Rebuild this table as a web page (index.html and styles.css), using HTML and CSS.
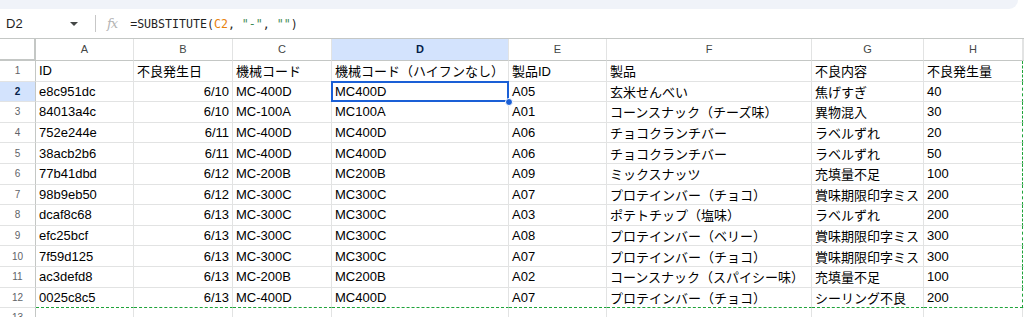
FILE: index.html
```html
<!DOCTYPE html>
<html lang="ja">
<head>
    <meta charset="UTF-8">
    <meta name="viewport" content="width=device-width, initial-scale=1.0">
    <title>不良データ</title>
    <link rel="stylesheet" href="styles.css">
</head>
<body>
    <div class="topbar"></div>
    <div class="formula-bar">
        <div class="name-box">
            <span>D2</span>
            <span class="caret"></span>
        </div>
        <div class="divider"></div>
        <span class="fx">fx</span>
        <div class="formula">=SUBSTITUTE(<span class="ref">C2</span>, <span class="str">"-"</span>, <span class="str">""</span>)</div>
    </div>

    <div class="sheet">
        <div class="row head">
            <div class="corner"></div>
            <div class="col">A</div>
            <div class="col">B</div>
            <div class="col">C</div>
            <div class="col picked">D</div>
            <div class="col">E</div>
            <div class="col">F</div>
            <div class="col">G</div>
            <div class="col">H</div>
            <div class="col"></div>
        </div>

        <div class="row">
            <div class="num">1</div>
            <div class="cell">ID</div>
            <div class="cell">不良発生日</div>
            <div class="cell">機械コード</div>
            <div class="cell">機械コード（ハイフンなし）</div>
            <div class="cell">製品ID</div>
            <div class="cell">製品</div>
            <div class="cell">不良内容</div>
            <div class="cell last">不良発生量</div>
            <div class="cell"></div>
        </div>
        <div class="row">
            <div class="num picked">2</div>
            <div class="cell">e8c951dc</div>
            <div class="cell right">6/10</div>
            <div class="cell">MC-400D</div>
            <div class="cell active">MC400D</div>
            <div class="cell">A05</div>
            <div class="cell">玄米せんべい</div>
            <div class="cell">焦げすぎ</div>
            <div class="cell last">40</div>
            <div class="cell"></div>
        </div>
        <div class="row">
            <div class="num">3</div>
            <div class="cell">84013a4c</div>
            <div class="cell right">6/10</div>
            <div class="cell">MC-100A</div>
            <div class="cell">MC100A</div>
            <div class="cell">A01</div>
            <div class="cell">コーンスナック（チーズ味）</div>
            <div class="cell">異物混入</div>
            <div class="cell last">30</div>
            <div class="cell"></div>
        </div>
        <div class="row">
            <div class="num">4</div>
            <div class="cell">752e244e</div>
            <div class="cell right">6/11</div>
            <div class="cell">MC-400D</div>
            <div class="cell">MC400D</div>
            <div class="cell">A06</div>
            <div class="cell">チョコクランチバー</div>
            <div class="cell">ラベルずれ</div>
            <div class="cell last">20</div>
            <div class="cell"></div>
        </div>
        <div class="row">
            <div class="num">5</div>
            <div class="cell">38acb2b6</div>
            <div class="cell right">6/11</div>
            <div class="cell">MC-400D</div>
            <div class="cell">MC400D</div>
            <div class="cell">A06</div>
            <div class="cell">チョコクランチバー</div>
            <div class="cell">ラベルずれ</div>
            <div class="cell last">50</div>
            <div class="cell"></div>
        </div>
        <div class="row">
            <div class="num">6</div>
            <div class="cell">77b41dbd</div>
            <div class="cell right">6/12</div>
            <div class="cell">MC-200B</div>
            <div class="cell">MC200B</div>
            <div class="cell">A09</div>
            <div class="cell">ミックスナッツ</div>
            <div class="cell">充填量不足</div>
            <div class="cell last">100</div>
            <div class="cell"></div>
        </div>
        <div class="row">
            <div class="num">7</div>
            <div class="cell">98b9eb50</div>
            <div class="cell right">6/12</div>
            <div class="cell">MC-300C</div>
            <div class="cell">MC300C</div>
            <div class="cell">A07</div>
            <div class="cell">プロテインバー（チョコ）</div>
            <div class="cell">賞味期限印字ミス</div>
            <div class="cell last">200</div>
            <div class="cell"></div>
        </div>
        <div class="row">
            <div class="num">8</div>
            <div class="cell">dcaf8c68</div>
            <div class="cell right">6/13</div>
            <div class="cell">MC-300C</div>
            <div class="cell">MC300C</div>
            <div class="cell">A03</div>
            <div class="cell">ポテトチップ（塩味）</div>
            <div class="cell">ラベルずれ</div>
            <div class="cell last">200</div>
            <div class="cell"></div>
        </div>
        <div class="row">
            <div class="num">9</div>
            <div class="cell">efc25bcf</div>
            <div class="cell right">6/13</div>
            <div class="cell">MC-300C</div>
            <div class="cell">MC300C</div>
            <div class="cell">A08</div>
            <div class="cell">プロテインバー（ベリー）</div>
            <div class="cell">賞味期限印字ミス</div>
            <div class="cell last">300</div>
            <div class="cell"></div>
        </div>
        <div class="row">
            <div class="num">10</div>
            <div class="cell">7f59d125</div>
            <div class="cell right">6/13</div>
            <div class="cell">MC-300C</div>
            <div class="cell">MC300C</div>
            <div class="cell">A07</div>
            <div class="cell">プロテインバー（チョコ）</div>
            <div class="cell">賞味期限印字ミス</div>
            <div class="cell last">300</div>
            <div class="cell"></div>
        </div>
        <div class="row">
            <div class="num">11</div>
            <div class="cell">ac3defd8</div>
            <div class="cell right">6/13</div>
            <div class="cell">MC-200B</div>
            <div class="cell">MC200B</div>
            <div class="cell">A02</div>
            <div class="cell">コーンスナック（スパイシー味）</div>
            <div class="cell">充填量不足</div>
            <div class="cell last">100</div>
            <div class="cell"></div>
        </div>
        <div class="row end">
            <div class="num">12</div>
            <div class="cell">0025c8c5</div>
            <div class="cell right">6/13</div>
            <div class="cell">MC-400D</div>
            <div class="cell">MC400D</div>
            <div class="cell">A07</div>
            <div class="cell">プロテインバー（チョコ）</div>
            <div class="cell">シーリング不良</div>
            <div class="cell last">200</div>
            <div class="cell"></div>
        </div>
        <div class="row">
            <div class="num">13</div>
            <div class="cell"></div>
            <div class="cell"></div>
            <div class="cell"></div>
            <div class="cell"></div>
            <div class="cell"></div>
            <div class="cell"></div>
            <div class="cell"></div>
            <div class="cell"></div>
            <div class="cell"></div>
        </div>
    </div>
</body>
</html>
```

FILE: styles.css
```css
:root {
    --grid: #e2e3e3;
    --head-line: #c4c7c5;
    --pick-bg: #d3e3fd;
    --pick-fg: #041e49;
    --blue: #1a5fd6;
    --copy: #1fa33a;
}
body, html {
    margin: 0;
    padding: 0;
    background-color: #ffffff;
    overflow: hidden;
}
body {
    font-family: "Liberation Sans", Arial, "Noto Sans CJK JP", sans-serif;
    color: #1f1f1f;
}

.topbar {
    height: 9px;
    background-color: #f0f3f9;
    border-bottom-right-radius: 10px;
    margin-right: 6px;
}

.formula-bar {
    height: 29px;
    display: flex;
    align-items: center;
}
.name-box {
    width: 90px;
    display: flex;
    align-items: center;
    justify-content: space-between;
    padding-left: 6px;
    padding-right: 12px;
    box-sizing: border-box;
    font-size: 13px;
}
.caret {
    width: 0;
    height: 0;
    border-left: 4px solid transparent;
    border-right: 4px solid transparent;
    border-top: 4px solid #444746;
}
.divider {
    width: 1px;
    height: 17px;
    background-color: #c7c7c7;
    margin-left: 5px;
}
.fx {
    font-family: "DejaVu Serif", serif;
    font-style: italic;
    font-size: 13px;
    color: #b4b4b4;
    margin-left: 11px;
    letter-spacing: -1px;
}
.formula {
    margin-left: 13px;
    font-family: "DejaVu Sans Mono", monospace;
    font-size: 11.6px;
    color: #1f1f1f;
}
.formula .ref {
    color: #e8820c;
}
.formula .str {
    color: #3f8a55;
}

/* grid */
.sheet {
    border-top: 1px solid var(--head-line);
}
.row {
    display: grid;
    grid-template-columns: 36px 98px 99px 99px 177px 98px 205px 112px 99px 1fr;
    height: 20.6px;
}
.row.head {
    height: 22px;
}
.row > div {
    box-sizing: border-box;
    border-right: 1px solid var(--grid);
    border-bottom: 1px solid var(--grid);
    white-space: nowrap;
    overflow: visible;
}
.corner {
    border-right: 2px solid #c4c7c5 !important;
    border-bottom: 2px solid #c4c7c5 !important;
    background-color: #ffffff;
}
.col {
    font-size: 11px;
    color: #444746;
    text-align: center;
    line-height: 21px;
    border-bottom-color: var(--head-line) !important;
}
.col.picked,
.num.picked {
    background-color: var(--pick-bg);
    color: var(--pick-fg);
    font-weight: bold;
}
.num {
    font-size: 10px;
    color: #5f6368;
    text-align: center;
    display: flex;
    align-items: center;
    justify-content: center;
    border-right-color: var(--head-line) !important;
}
.cell {
    font-size: 13px;
    padding: 0 3px;
    display: flex;
    align-items: center;
    color: #000000;
}
.cell.right {
    justify-content: flex-end;
}
.cell.last {
    border-right: 1px dashed var(--copy) !important;
}
.row.end > .cell:not(:last-child) {
    border-bottom: 1px dashed var(--copy);
}

.active {
    position: relative;
}
.active::before {
    content: "";
    position: absolute;
    top: -1px;
    left: -1px;
    right: -1px;
    bottom: -1px;
    border: 2px solid var(--blue);
}
.active::after {
    content: "";
    position: absolute;
    right: -5px;
    bottom: -5px;
    width: 8px;
    height: 8px;
    border-radius: 50%;
    background-color: var(--blue);
    border: 1px solid #ffffff;
    box-sizing: border-box;
    z-index: 2;
}
```
